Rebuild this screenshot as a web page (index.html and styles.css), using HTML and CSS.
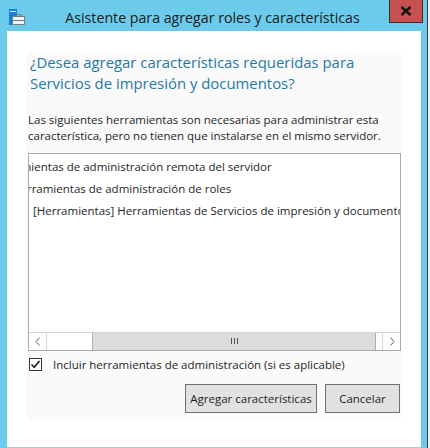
FILE: index.html
```html
<!DOCTYPE html>
<html lang="es">
<head>
<meta charset="utf-8">
<link rel="stylesheet" href="styles.css">
</head>
<body>
<div class="window">
  <div class="titlebar">
    <svg class="app-icon" width="18" height="18" viewBox="0 0 18 18">
      <rect x="1" y="1" width="8" height="16" fill="#1580dc"/>
      <rect x="2" y="3" width="6" height="1" fill="#e8f4fc"/>
      <path d="M4.5 8.5 H16.5 V16.5 H4.5 Z" fill="#eef2f4" stroke="#6f7d87" stroke-width="1"/>
      <path d="M8 8.5 V6.5 H13 V8.5" fill="none" stroke="#6f7d87" stroke-width="1"/>
      <path d="M4.5 12.5 H16.5" stroke="#6f7d87" stroke-width="1"/>
    </svg>
    <div class="title">Asistente para agregar roles y características</div>
    <div class="close">
      <svg width="12" height="10" viewBox="0 0 12 10"><path d="M1.5 1 L10.5 9 M10.5 1 L1.5 9" stroke="#111" stroke-width="2.4"/></svg>
    </div>
  </div>
  <div class="client">
    <div class="panel">
      <h1 class="heading">¿Desea agregar características requeridas para Servicios de impresión y documentos?</h1>
      <p class="desc">Las siguientes herramientas son necesarias para administrar esta característica, pero no tienen que instalarse en el mismo servidor.</p>
      <div class="listbox">
        <div class="tree">
          <div class="row lvl0"><span class="label">Herramientas de administración remota del servidor</span></div>
          <div class="row lvl1"><span class="label">Herramientas de administración de roles</span></div>
          <div class="row lvl2"><span class="label">[Herramientas] Herramientas de Servicios de impresión y documentos</span></div>
        </div>
        <div class="hscroll">
          <div class="arrow left">
            <svg width="6" height="9" viewBox="0 0 6 9"><path d="M4.5 0.5 L1 4.5 L4.5 8.5" fill="none" stroke="#606060" stroke-width="1"/></svg>
          </div>
          <div class="track">
            <div class="thumb"><span class="grip"></span><span class="grip"></span><span class="grip"></span></div>
          </div>
          <div class="arrow right">
            <svg width="6" height="9" viewBox="0 0 6 9"><path d="M1.5 0.5 L5 4.5 L1.5 8.5" fill="none" stroke="#606060" stroke-width="1"/></svg>
          </div>
        </div>
      </div>
      <label class="check">
        <span class="box">
          <svg width="11" height="11" viewBox="0 0 11 11"><path d="M1.5 5.5 L4.2 8.3 L9.5 2" fill="none" stroke="#222" stroke-width="1.7"/></svg>
        </span>
        <span>Incluir herramientas de administración (si es aplicable)</span>
      </label>
      <div class="buttons">
        <button class="btn add">Agregar características</button>
        <button class="btn cancel">Cancelar</button>
      </div>
    </div>
  </div>
</div>
</body>
</html>
```

FILE: styles.css
```css
html, body {
  margin: 0;
  padding: 0;
  width: 430px;
  height: 448px;
  overflow: hidden;
  background: #f0f0f0;
}
body {
  font-family: "Open Sans", "Noto Sans", "DejaVu Sans", sans-serif;
  display: flex;
}
.window {
  width: 428px;
  height: 448px;
  background: #6ccbea;
  border-right: 1px solid #2e3a40;
  display: flex;
  flex-direction: column;
  box-sizing: border-box;
}
.titlebar {
  height: 32px;
  display: flex;
  align-items: flex-start;
  position: relative;
}
.app-icon {
  margin: 8px 0 0 8px;
  display: block;
}
.title {
  flex: 1;
  text-align: center;
  font-size: 14.2px;
  color: #1a1a1a;
  line-height: 18px;
  margin-top: 9px;
  padding-left: 10px;
}
.close {
  width: 34px;
  height: 23px;
  background: #c75050;
  box-sizing: border-box;
  border: 1px solid #3b2b2b;
  border-top: none;
  display: flex;
  align-items: center;
  justify-content: center;
  margin-right: 4px;
}
.close svg { display: block; }
.client {
  margin: 0 6px 0 7px;
  height: 409px;
  background: #ffffff;
  border-bottom: 1px solid #b7c8d0;
  padding: 21px 0 0 20px;
  box-sizing: content-box;
}
.panel {
  width: 374px;
  height: 368px;
  background: #fafafa;
  display: flex;
  flex-direction: column;
}
.heading {
  margin: 0;
  padding-left: 3px;
  font-weight: normal;
  font-size: 14.9px;
  line-height: 21px;
  color: #1f79a6;
}
.desc {
  margin: 18px 0 0 1px;
  font-size: 11.5px;
  line-height: 16px;
  color: #1e1e1e;
}
.listbox {
  margin: 9px 0 0 1px;
  width: 373px;
  height: 198px;
  box-sizing: border-box;
  border: 1px solid #ababab;
  background: #ffffff;
  display: flex;
  flex-direction: column;
}
.tree {
  flex: 1;
  overflow: hidden;
  padding-top: 2px;
  font-size: 11.5px;
  color: #1e1e1e;
}
.row {
  height: 22px;
  line-height: 22px;
  white-space: nowrap;
}
.row.lvl0 .label { margin-left: -39px; }
.row.lvl1 .label { margin-left: -17px; }
.row.lvl2 .label { margin-left: 4px; }
.hscroll {
  height: 17px;
  border-top: 1px solid #d4d4d4;
  display: flex;
  background: #ffffff;
}
.arrow {
  width: 17px;
  display: flex;
  align-items: center;
  justify-content: center;
}
.arrow.left { border-right: 1px solid #d4d4d4; }
.arrow.right { border-left: 1px solid #d4d4d4; }
.track {
  flex: 1;
  display: flex;
  padding-left: 45px;
  padding-right: 6px;
}
.thumb {
  flex: 1;
  background: #dcdcdc;
  border: 1px solid #b0b0b0;
  border-top: none;
  border-bottom: none;
  display: flex;
  align-items: center;
  justify-content: center;
  gap: 2px;
}
.grip {
  width: 1px;
  height: 6px;
  background: #505050;
}
.check {
  margin: 7px 0 0 2px;
  display: flex;
  align-items: center;
  gap: 11px;
  font-size: 11.5px;
  color: #1e1e1e;
  height: 14px;
}
.box {
  width: 13px;
  height: 13px;
  box-sizing: border-box;
  border: 1px solid #333;
  background: #fff;
  display: flex;
  align-items: center;
  justify-content: center;
}
.box svg { display: block; }
.buttons {
  margin-top: 12px;
  display: flex;
  justify-content: flex-end;
  gap: 8px;
  padding-right: 1px;
}
.btn {
  height: 29px;
  box-sizing: border-box;
  background: #e1e1e1;
  border: 1px solid #707070;
  font-family: inherit;
  font-size: 11.5px;
  color: #1e1e1e;
  padding: 0;
}
.btn.add { width: 132px; }
.btn.cancel { width: 75px; }
```
